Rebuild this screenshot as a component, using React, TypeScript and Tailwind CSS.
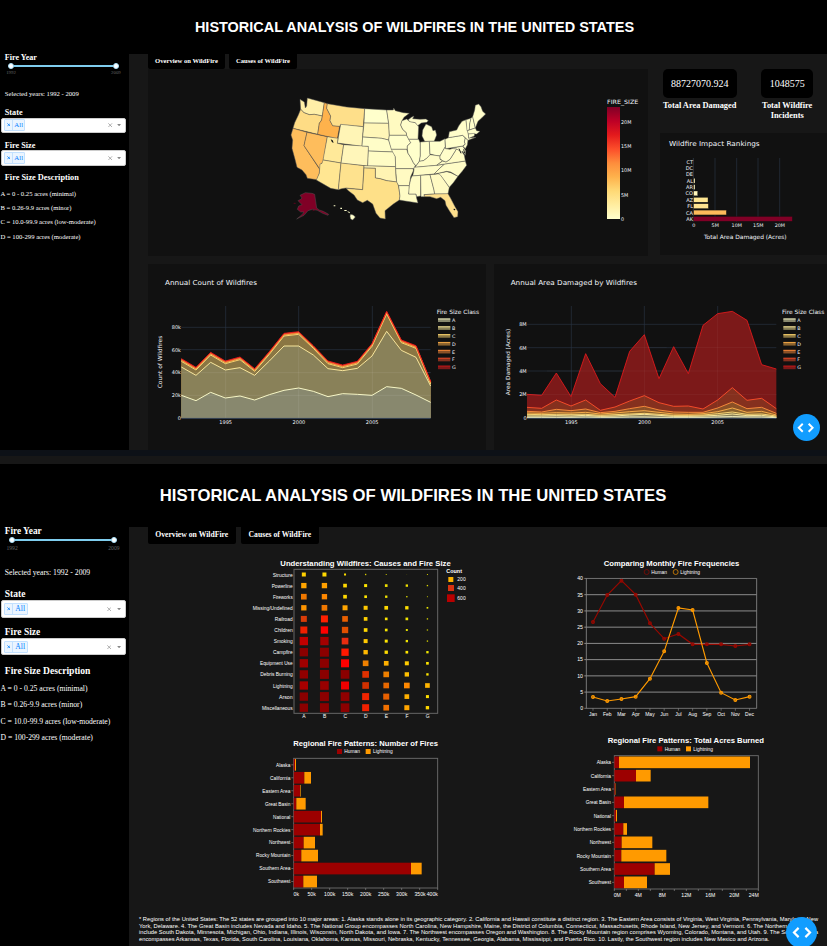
import React from "react";

const SANS = "'DejaVu Sans', Verdana, sans-serif";
const ARIAL = "'Liberation Sans', Arial, sans-serif";

type LabelProps = {
  x: number;
  y: number;
  size: number;
  children: string;
  w?: number;
  anchor?: "start" | "middle" | "end";
  family?: string;
  bold?: boolean;
  fill?: string;
  rotate?: boolean;
};

/** Chart text, centred vertically around y. */
function Label({ x, y, size, children, w, anchor = "start", family = SANS, bold, fill = "#f2f5fa", rotate }: LabelProps) {
  return (
    <text
      x={x}
      y={y + size * 0.36}
      fontSize={size}
      fontFamily={family}
      fontWeight={bold ? 700 : 400}
      fill={fill}
      textAnchor={anchor}
      textLength={w}
      lengthAdjust="spacingAndGlyphs"
      transform={rotate ? `rotate(-90 ${x} ${y})` : undefined}
    >
      {children}
    </text>
  );
}

/* ---------- sidebar ---------- */

function Select({ big }: { big?: boolean }) {
  return (
    <div
      className={
        "ml-px flex w-[125.3px] items-center rounded-[2px] border border-[#ccc] bg-white " +
        (big ? "h-[17.3px]" : "h-[15.5px]")
      }
    >
      <div
        className={
          "ml-[1.6px] flex items-stretch rounded-[1px] border border-[#c2e0ff] bg-[#ebf5ff] text-[#007eff] " +
          (big ? "h-[12.6px] w-[24.6px] text-[7.6px]" : "h-[11.6px] w-[21.6px] text-[6.8px]")
        }
      >
        <span className="flex w-[8.6px] items-center justify-center border-r border-[#c2e0ff]">
          <svg width="3.6" height="3.6" viewBox="0 0 4 4">
            <path d="M.4 .4 3.6 3.6M3.6 .4 .4 3.6" stroke="#007eff" strokeWidth=".85" />
          </svg>
        </span>
        <span className="flex flex-1 items-center justify-center">All</span>
      </div>
      <div className={"ml-auto flex items-center " + (big ? "mr-[4.5px] gap-[5.5px]" : "mr-[4px] gap-[4.5px]")}>
        <svg width="4.4" height="4.4" viewBox="0 0 4 4">
          <path d="M.3 .3 3.7 3.7M3.7 .3 .3 3.7" stroke="#888" strokeWidth=".6" />
        </svg>
        <svg width="4.2" height="2.4" viewBox="0 0 4 2.4">
          <path d="M0 0H4L2 2.3Z" fill="#888" />
        </svg>
      </div>
    </div>
  );
}

function Slider({ big }: { big?: boolean }) {
  return (
    <>
      <div className={"flex items-center " + (big ? "ml-[9px] h-[10px] w-[108px]" : "ml-[8px] h-[7.5px] w-[111px]")}>
        <i className="size-[6.4px] shrink-0 rounded-full border border-[#abe2fb] bg-white" />
        <i className="h-[2px] flex-1 bg-[#7fcdee]" />
        <i className="size-[6.4px] shrink-0 rounded-full border border-[#abe2fb] bg-white" />
      </div>
      <div
        className={
          "flex h-[7px] items-center justify-between leading-none text-[#666] " +
          (big ? "ml-[6.5px] w-[113px] text-[5.6px]" : "ml-[6.2px] w-[114.5px] text-[4.8px]")
        }
      >
        <span>1992</span>
        <span>2009</span>
      </div>
    </>
  );
}

const sizes = [
  "A = 0 - 0.25 acres (minimal)",
  "B = 0.26-9.9 acres (minor)",
  "C = 10.0-99.9 acres (low-moderate)",
  "D = 100-299 acres (moderate)",
];

function Sidebar({ big }: { big?: boolean }) {
  const head = "ml-[4.8px] flex items-center whitespace-nowrap font-bold leading-none ";
  return (
    <aside className="w-[128.6px] shrink-0 bg-black">
      <div className={head + (big ? "h-[8px] pt-[1.4px] text-[9.3px]" : "h-[8px] pt-[0.6px] text-[8.1px]")}>Fire Year</div>
      <Slider big={big} />
      <div
        className={
          "ml-[4.8px] flex h-[10px] items-center whitespace-nowrap " +
          (big ? "mt-[15.5px] text-[7.7px]" : "mt-[12px] text-[6.66px]")
        }
      >
        Selected years: 1992 - 2009
      </div>
      <div className={head + (big ? "mt-[12px] h-[10.8px] text-[9.5px]" : "mt-[9.5px] h-[9.5px] text-[8.2px]")}>State</div>
      <Select big={big} />
      <div className={head + (big ? "mt-[10px] h-[10.6px] text-[9.5px]" : "mt-[8px] h-[9.3px] text-[8.2px]")}>Fire Size</div>
      <Select big={big} />
      <div className={head + (big ? "mt-[9.8px] h-[10px] pt-px text-[9.6px]" : "mt-[7.2px] h-[10px] pt-px text-[8.3px]")}>
        Fire Size Description
      </div>
      <div className={big ? "mt-[4.7px]" : "mt-[3.5px]"}>
        {sizes.map((s) => (
          <div
            key={s}
            className={
              "ml-[0.5px] flex items-center whitespace-nowrap " + (big ? "h-[16.6px] text-[7.67px]" : "h-[14.4px] text-[6.65px]")
            }
          >
            {s}
          </div>
        ))}
      </div>
    </aside>
  );
}

function Fab({ big }: { big?: boolean }) {
  return (
    <button
      className={
        "absolute flex items-center justify-center rounded-full bg-[#119dff] " +
        (big ? "left-[786px] top-[453.3px] size-[31px]" : "left-[792.7px] top-[414.3px] size-[27px]")
      }
    >
      <svg width={big ? 20 : 17.4} height={big ? 11 : 9.6} viewBox="0 0 20 11" fill="none" stroke="#fff" strokeWidth="2.2">
        <path d="M6.6 .9 2 5.5 6.6 10.1M13.4 .9 18 5.5 13.4 10.1" />
      </svg>
    </button>
  );
}

/* ---------- map ---------- */

const states: [string, string][] = [
  ["82,54 133,68 127,108 103,103 88,104 72,98 62,88 61,72 60,58 73,66 76,84 80,78", "#ffefa8"],
  ["62,88 72,98 88,104 103,103 127,108 125,120 118,130 113,163 39,145 44,128 55,105", "#fedc85"],
  ["39,145 81,157 72,197 119,268 118,280 111,299 82,295 78,284 66,270 51,262 45,238 36,205 38,180 33,165", "#febd5c"],
  ["81,157 142,170 129,248 124,250 120,268 72,197", "#febd5c"],
  ["133,68 142,71 140,85 152,108 150,122 158,137 179,139 172,176 113,163 118,130 125,120 127,108", "#feb24c"],
  ["142,71 200,81 254,86 250,140 182,134 179,139 158,137 150,122 152,108 140,85", "#fedf8a"],
  ["182,133 250,140 246,199 172,189", "#fff5b6"],
  ["142,170 174,175 172,190 191,194 183,249 129,240", "#ffe999"],
  ["191,194 266,199 263,258 183,250", "#fff6ba"],
  ["129,240 183,249 175,329 152,325 109,300 118,280 119,266 120,252 126,250", "#ffe692"],
  ["183,249 252,257 248,329 198,324 185,326 175,329", "#fee28e"],
  ["254,86 320,90 326,130 252,129", "#ffffcc"],
  ["252,129 326,130 328,166 326,180 305,175 248,171", "#fff6b8"],
  ["248,171 305,175 326,180 334,205 341,216 265,213 265,199 246,198", "#fffdc8"],
  ["265,213 341,216 346,230 347,260 263,258", "#fffcc5"],
  ["252,257 347,260 348,290 350,306 320,302 300,296 286,294 286,265 252,264", "#fff4b3"],
  ["252,264 286,265 286,294 300,296 320,302 352,306 356,320 360,348 358,360 340,372 315,392 316,417 300,414 288,400 278,372 262,361 248,368 232,360 222,345 205,332 198,325 248,329", "#fee088"],
  ["320,90 340,90 341,84 346,92 370,98 388,100 372,112 366,122 362,135 368,148 379,158 380,166 328,166 326,130", "#fffac1"],
  ["328,166 380,166 388,180 392,188 382,198 382,208 334,208 326,180", "#ffffcc"],
  ["334,208 380,208 384,220 392,232 400,248 406,256 402,266 347,266 346,230 338,216", "#fffcc6"],
  ["347,266 400,266 400,272 392,290 388,317 356,317 350,306", "#fffac2"],
  ["356,317 388,317 388,330 386,342 408,342 410,355 414,369 395,366 375,363 358,360 360,348", "#fffcc5"],
  ["366,122 380,117 388,124 406,128 412,134 416,140 414,178 386,178 380,166 379,158 368,148 362,135", "#fffdca"],
  ["384,120 394,112 402,108 398,116 420,118 438,117 445,122 440,127 424,129 413,137 406,128 390,125", "#fffdca"],
  ["434,184 426,168 428,150 438,132 455,140 459,152 466,150 470,165 464,180 462,184", "#fffdca"],
  ["386,178 416,178 421,190 421,228 418,244 408,258 400,248 392,232 384,220 382,208 382,198 392,188", "#ffffcc"],
  ["421,186 448,184 450,225 440,235 430,242 418,244 421,228", "#ffffcc"],
  ["448,184 464,184 480,184 495,176 496,200 488,214 480,228 465,226 450,222", "#ffffcc"],
  ["418,244 430,242 440,235 450,224 465,226 480,228 480,238 488,242 470,256 404,262 408,258", "#fffcc6"],
  ["402,262 470,256 494,252 480,264 462,282 398,288 402,270", "#fffcc6"],
  ["396,288 422,286 422,348 410,350 408,342 386,342 388,316 392,298", "#fffcc6"],
  ["422,286 450,284 462,330 464,342 432,344 434,350 423,350", "#fffcc6"],
  ["450,284 480,281 508,322 504,342 464,342 462,330", "#fffac2"],
  ["432,344 464,342 504,341 512,355 524,378 534,395 533,410 522,413 508,392 498,376 495,362 482,352 470,356 450,350 434,350", "#fedf8c"],
  ["474,280 500,275 512,278 534,289 520,308 508,322 482,286", "#fffcc6"],
  ["494,252 556,243 560,256 548,272 534,289 512,276 500,274 474,280 462,282 480,264", "#fffcc6"],
  ["470,256 488,243 498,246 510,238 520,222 530,206 545,214 553,226 556,243 494,252", "#fffcc6"],
  ["496,200 497,206 510,208 520,204 530,206 520,222 510,238 498,246 488,242 480,236 480,228 488,214", "#fffdca"],
  ["514,205 548,198 557,212 556,226 548,214 545,216 530,207", "#ffffcc"],
  ["495,178 505,173 548,166 556,174 553,186 556,192 548,198 497,206", "#ffffcc"],
  ["556,174 564,180 562,195 556,206 549,199 556,192 553,186", "#ffffcc"],
  ["505,173 508,155 530,150 536,138 546,124 558,119 562,148 565,160 566,174 588,172 564,181 548,166", "#fffdca"],
  ["558,119 573,115 569,132 568,150 561,152", "#ffffcc"],
  ["573,115 578,110 586,144 568,150 569,132", "#ffffcc"],
  ["578,110 584,90 586,76 596,72 603,80 608,94 617,102 605,114 594,124 586,144", "#fffdca"],
  ["562,152 586,144 590,152 600,154 590,162 565,162", "#ffffcc"],
  ["565,162 584,160 583,168 566,175", "#ffffcc"],
  ["76,338 96,340 104,343 110,384 118,390 130,394 146,403 144,406 128,400 112,391 98,388 84,392 72,406 50,417 66,404 72,396 62,396 52,388 56,378 66,374 54,362 62,358 66,354 60,346", "#800026"],
  ["212,403 220,405 226,411 218,420 212,417 210,408", "#ffffcc"],
];

function MapPanel() {
  return (
    <svg className="h-[187px] w-[500px] bg-[#111111]" viewBox="-396 -33 1500 561">
      <defs>
        <linearGradient id="ylorrd" x1="0" y1="1" x2="0" y2="0">
          {["#ffffcc", "#ffeda0", "#fed976", "#feb24c", "#fd8d3c", "#fc4e2a", "#e31a1c", "#bd0026", "#800026"].map((c, i) => (
            <stop key={c} offset={i / 8} stopColor={c} />
          ))}
        </linearGradient>
      </defs>
      {states.map(([points, color]) => (
        <polygon key={points} points={points} fill={color} stroke="#555" strokeWidth="1.4" strokeLinejoin="round" />
      ))}
      <path d="M152 178l6 3 3 7-5-1zM521 386l5 1-1 4-4-1z" fill="#111" />
      <path d="M161 376h5v3h-5zM181 383h5v4h-5zM193 390h7v3h-7zM202 394l7 2 1 4-6-3z" fill="#ffffcc" />
      <path d="M41 370h6M98 392l8-3" stroke="#800026" strokeWidth="2" />
      <path d="M537 206l6 14M551 208l3 12" stroke="#222" strokeWidth="3" />
      <g transform="translate(930 -90)">
        <Label x={51} y={156} size={17.5} w={94}>FIRE_SIZE</Label>
        <rect x={51} y={171} width={39} height={336} fill="url(#ylorrd)" />
        {["0", "5M", "10M", "15M", "20M"].map((t, i) => (
          <Label key={t} x={93} y={507 - i * 72.8} size={15} w={[9, 22, 31, 31, 31][i]}>{t}</Label>
        ))}
      </g>
    </svg>
  );
}

/* ---------- overview charts ---------- */

const ranks: [string, number, string][] = [
  ["CT", 0, "#ffffcc"], ["DC", 0, "#ffffcc"], ["DE", 0, "#ffffcc"], ["AL", 4, "#fff7bc"], ["AR", 4, "#fff7bc"],
  ["CO", 12, "#fff6ba"], ["AZ", 43, "#fee692"], ["FL", 44, "#fee391"], ["CA", 98, "#febb5a"], ["AK", 296, "#800026"],
];

function Rankings() {
  return (
    <svg className="h-[122px] w-[167px] bg-[#111111]" viewBox="210 249 501 366">
      <Label x={237} y={281} size={20.5} w={272}>Wildfire Impact Rankings</Label>
      {[375, 440, 504, 569].map((x) => (
        <path key={x} d={`M${x} 324V516`} stroke="#283442" strokeWidth="2" />
      ))}
      <path d="M310 324V516" stroke="#506784" strokeOpacity=".6" strokeWidth="2" />
      {ranks.map(([s, v, c], i) => (
        <g key={s}>
          {v > 0 && <rect x={311} y={327.5 + i * 19.1} width={v} height={14.5} fill={c} stroke="#111" strokeWidth="1" />}
          <Label x={309} y={335.5 + i * 19.1} size={15} anchor="end">{s}</Label>
        </g>
      ))}
      {["0", "5M", "10M", "15M", "20M"].map((t, i) => (
        <Label key={t} x={311 + i * 64.6} y={527} size={14.5} anchor="middle">{t}</Label>
      ))}
      <Label x={342} y={560} size={17.5} w={248}>Total Area Damaged (Acres)</Label>
    </svg>
  );
}

const lineColors = ["#ffffcc", "#ffeda0", "#fed976", "#feb24c", "#fd8d3c", "#fc4e2a", "#e31a1c"];
const fillColors = ["#88886e", "#898159", "#8a7643", "#8a622e", "#8a5026", "#85301e", "#7c1919"];
const legendLines = ["#e6e6b8", "#ead98f", "#f0cb68", "#e8a043", "#e87f35", "#dc4526", "#bf1718"];

function StackedArea({ series, x0 }: { series: number[][]; x0: number }) {
  const xs = series[0].map((_, i) => x0 + i * 44);
  const pts = (s: number[]) => s.map((y, i) => `${xs[i]},${y}`).join(" ");
  const right = xs[xs.length - 1];
  return (
    <>
      {[...series].reverse().map((s, k) => {
        const i = 6 - k;
        return <polygon key={i} points={`${pts(s)} ${right},474 ${x0},474`} fill={fillColors[i]} />;
      })}
      {series.map((s, i) => (
        <polyline key={i} points={pts(s)} fill="none" stroke={lineColors[i]} strokeWidth={i === 6 ? 2.6 : 2.8} />
      ))}
    </>
  );
}

function AreaLegend({ x }: { x: number }) {
  return (
    <>
      <Label x={x} y={155} size={17.5} w={127}>Fire Size Class</Label>
      {["A", "B", "C", "D", "E", "F", "G"].map((t, i) => (
        <g key={t}>
          <rect x={x + 4} y={177 + i * 23.6} width={37} height={9} fill={fillColors[i]} />
          <rect x={x + 4} y={175 + i * 23.6} width={37} height={3.5} fill={legendLines[i]} />
          <Label x={x + 46} y={181 + i * 23.6} size={14.5}>{t}</Label>
        </g>
      ))}
    </>
  );
}

const countTop = [296, 322, 277, 303, 291, 326, 275, 220, 215, 257, 303, 315, 304, 251, 154, 240, 257, 364];
const countSeries = [
  [406, 422, 397, 414, 408, 420, 404, 391, 384, 394, 410, 401, 403, 406, 380, 385, 405, 427],
  [321, 346, 307, 330, 323, 346, 303, 258, 258, 285, 326, 332, 325, 288, 214, 271, 292, 378],
  countTop.map((y) => y + 8),
  countTop.map((y) => y + 5),
  countTop.map((y) => y + 3),
  countTop.map((y) => y + 1.5),
  countTop,
];

function AnnualCount() {
  return (
    <svg className="h-[186px] w-[338px] bg-[#111111]" viewBox="24 12 1014 558">
      <Label x={75} y={68} size={20.5} w={276}>Annual Count of Wildfires</Label>
      <path d="M257 138V474M476 138V474M697 138V474M124 202H872M124 269H872M124 338H872M124 406H872" stroke="#283442" strokeWidth="2" />
      <StackedArea series={countSeries} x0={124} />
      <path d="M257 300V474M476 215V474M697 250V474M124 338H872M124 406H872" stroke="#fff" strokeOpacity=".12" strokeWidth="2" />
      <path d="M124 475H872" stroke="#506784" strokeWidth="2" />
      {["0", "20k", "40k", "60k", "80k"].map((t, i) => (
        <Label key={t} x={123} y={474 - i * 68.2} size={15} anchor="end">{t}</Label>
      ))}
      {["1995", "2000", "2005"].map((t, i) => (
        <Label key={t} x={257 + i * 219.7} y={486} size={15} anchor="middle">{t}</Label>
      ))}
      <Label x={60} y={306} size={17} w={158} anchor="middle" rotate>Count of Wildfires</Label>
      <AreaLegend x={890} />
    </svg>
  );
}

const areaSeries = [
  [472, 472, 472, 472, 471, 472, 472, 471, 471, 472, 472, 472, 472, 471, 470, 471, 471, 473],
  [468, 468, 467, 468, 466, 469, 468, 465, 463, 466, 469, 469, 468, 466, 462, 467, 466, 471],
  [463, 464, 463, 463, 463, 466, 464, 462, 460, 463, 466, 466, 465, 461, 456, 463, 462, 468],
  [459, 460, 458, 459, 457, 462, 459, 455, 452, 457, 462, 463, 461, 455, 444, 457, 454, 465],
  [454, 456, 448, 452, 447, 458, 454, 446, 439, 450, 456, 457, 457, 444, 426, 446, 442, 460],
  [442, 445, 420, 438, 420, 451, 441, 423, 407, 428, 439, 438, 447, 420, 383, 421, 415, 446],
  [403, 406, 339, 410, 281, 371, 412, 274, 224, 356, 260, 341, 196, 161, 154, 181, 314, 327],
];

function AnnualArea() {
  return (
    <svg className="h-[186px] w-[333px] bg-[#111111]" viewBox="42 12 999 558">
      <Label x={92} y={68} size={20.5} w={379}>Annual Area Damaged by Wildfires</Label>
      <path d="M274 138V474M493 138V474M713 138V474M141 193H889M141 263H889M141 333H889M141 404H889" stroke="#283442" strokeWidth="2" />
      <StackedArea series={areaSeries} x0={141} />
      <path d="M274 410V474M493 224V474M713 161V474M460 263H560M650 263H830M200 333H889M141 404H889" stroke="#fff" strokeOpacity=".07" strokeWidth="2" />
      <path d="M141 475H889" stroke="#506784" strokeWidth="2" />
      {["0", "2M", "4M", "6M", "8M"].map((t, i) => (
        <Label key={t} x={140} y={474 - i * 70.2} size={15} anchor="end">{t}</Label>
      ))}
      {["1995", "2000", "2005"].map((t, i) => (
        <Label key={t} x={274 + i * 219.5} y={486} size={15} anchor="middle">{t}</Label>
      ))}
      <Label x={84} y={306} size={17} w={200} anchor="middle" rotate>Area Damaged (Acres)</Label>
      <AreaLegend x={906} />
    </svg>
  );
}

/* ---------- causes charts ---------- */

const causes: [string, number, number[], string[]][] = [
  ["Structure", 60, [12, 12, 6, 4, 3, 1.5, 3], ["#ffd000", "#ffd800", "#ffe000", "#d8cc00", "#c8c400", "#777700", "#d0cc00"]],
  ["Powerline", 63, [16, 16, 11, 9, 8, 7, 4], ["#ffa500", "#ffa000", "#ffd800", "#ffe600", "#f0e000", "#f0e000", "#d8d400"]],
  ["Fireworks", 59, [17, 16, 11, 8, 7, 4, 3], ["#f07800", "#ff8800", "#ffd800", "#ffe600", "#f0e400", "#e0dc00", "#b0b000"]],
  ["Missing/Undefined", 120, [16, 17, 15, 12, 11, 10, 5], ["#ff9500", "#f07800", "#ffa500", "#ffc800", "#ffd800", "#ffe000", "#e8e400"]],
  ["Railroad", 54, [18, 21, 17, 11, 8, 8, 4], ["#d83c08", "#ff2000", "#e86000", "#ffd000", "#ffe600", "#f0e400", "#d8d400"]],
  ["Children", 55, [21, 22, 19, 11, 8, 6, 4], ["#f02000", "#ff0000", "#e05000", "#ffd800", "#f8e800", "#e0dc00", "#b8b800"]],
  ["Smoking", 57, [25, 25, 20, 12, 9, 7, 4], ["#c00000", "#a40000", "#e82c10", "#ffc800", "#ffe600", "#f0e400", "#d8d400"]],
  ["Campfire", 59, [25, 27, 22, 13, 10, 8, 7], ["#8b0000", "#8b0000", "#ff1800", "#ffb800", "#ffdc00", "#ffe600", "#f0e800"]],
  ["Equipment Use", 98, [25, 27, 24, 17, 14, 12, 8], ["#a00000", "#8b0000", "#ff0000", "#f08000", "#ffb000", "#ffcc00", "#ffe600"]],
  ["Debris Burning", 97, [25, 27, 26, 20, 17, 13, 7], ["#900000", "#8b0000", "#8b0000", "#e03000", "#f08000", "#ffc000", "#ffe600"]],
  ["Lightning", 59, [25, 26, 24, 20, 17, 17, 14], ["#a80000", "#980000", "#f00000", "#d03000", "#e86800", "#ff8800", "#ffb400"]],
  ["Arson", 41, [25, 27, 26, 21, 18, 14, 9], ["#8b0000", "#8b0000", "#900000", "#f02400", "#e86000", "#ffb000", "#ffe000"]],
  ["Miscellaneous", 92, [25, 27, 26, 21, 17, 15, 10], ["#8b0000", "#8b0000", "#8b0000", "#f02000", "#f07000", "#ffa500", "#ffd800"]],
];

function CauseMatrix() {
  return (
    <svg className="h-[180px] w-[240px]" viewBox="0 0 720 540">
      <Label x={121} y={38} size={24} w={511} family={ARIAL} bold fill="#fff">Understanding Wildfires: Causes and Fire Size</Label>
      <rect x={162} y={58} width={431} height={432} fill="none" stroke="#666" strokeWidth="3" />
      {causes.map(([name, w, s, colors], r) => (
        <g key={name}>
          <Label x={158} y={74 + r * 33.3} size={15.5} w={w} anchor="end" family={ARIAL} fill="#fff">{name}</Label>
          {s.map((d, c) => (
            <rect key={c} x={191.5 + c * 61.8 - d / 2} y={73.5 + r * 33.3 - d / 2} width={d} height={d} fill={colors[c]} />
          ))}
        </g>
      ))}
      {["A", "B", "C", "D", "E", "F", "G"].map((t, i) => (
        <Label key={t} x={192 + i * 61.8} y={500} size={15} anchor="middle" family={ARIAL} fill="#fff">{t}</Label>
      ))}
      <Label x={619} y={64} size={16.5} w={47} family={ARIAL} bold fill="#fff">Count</Label>
      <rect x={625} y={81} width={15} height={15} fill="#ffb400" />
      <rect x={624} y={105} width={18} height={18} fill="#d83210" />
      <rect x={621} y={133} width={23} height={23} fill="#b80000" />
      {["200", "400", "600"].map((t, i) => (
        <Label key={t} x={652} y={[88, 115, 146][i]} size={15} w={25} family={ARIAL} fill="#fff">{t}</Label>
      ))}
    </svg>
  );
}

const human = [216, 135, 92, 134, 220, 266, 252, 283, 283, 283, 288, 283];
const lightning = [441, 453, 447, 440, 386, 304, 174, 180, 339, 428, 450, 440];

function Monthly() {
  const at = (i: number) => 99 + i * 42.7;
  return (
    <svg className="h-[180px] w-[240px]" viewBox="0 0 720 540">
      <Label x={131} y={38} size={24} w={407} family={ARIAL} bold fill="#fff">Comparing Monthly Fire Frequencies</Label>
      <circle cx={260} cy={66} r={7.5} fill="none" stroke="#960800" strokeWidth="2" />
      <Label x={274} y={66} size={15.5} w={47} family={ARIAL} fill="#fff">Human</Label>
      <circle cx={347} cy={66} r={7.5} fill="none" stroke="#ff9a00" strokeWidth="2" />
      <Label x={361} y={66} size={15.5} w={59} family={ARIAL} fill="#fff">Lightning</Label>
      {[0, 5, 10, 15, 20, 25, 30, 35, 40].map((v) => {
        const y = 475 - v * 9.74;
        return (
          <g key={v}>
            <path d={`M73 ${y}H590`} stroke={v === 0 || v === 40 ? "#888" : "#aaa"} strokeWidth="2.4" />
            <Label x={69} y={y} size={15.5} anchor="end" family={ARIAL} fill="#fff">{String(v)}</Label>
          </g>
        );
      })}
      <path d="M79 85V475M590 85V475" stroke="#888" strokeWidth="2.6" />
      {[human, lightning].map((s, k) => (
        <g key={k} fill="none" stroke={k ? "#ff9a00" : "#980800"} strokeWidth="3.4">
          <polyline points={s.map((y, i) => `${at(i)},${y}`).join(" ")} />
          {s.map((y, i) => (
            <circle key={i} cx={at(i)} cy={y} r={4.2} fillOpacity=".45" fill={k ? "#ff9a00" : "#980800"} />
          ))}
        </g>
      ))}
      {["Jan", "Feb", "Mar", "Apr", "May", "Jun", "Jul", "Aug", "Sep", "Oct", "Nov", "Dec"].map((t, i) => (
        <g key={t}>
          <path d={`M${at(i)} 475V482`} stroke="#888" strokeWidth="2" />
          <Label x={at(i)} y={493} size={15} anchor="middle" family={ARIAL} fill="#fff">{t}</Label>
        </g>
      ))}
    </svg>
  );
}

type Region = [string, number, number, number];

function RegionBars({ title, titleX, titleW, titleY, legendX, top, bottom, x0, right, rows, ticks, marks }: {
  title: string; titleX: number; titleW: number; titleY: number; legendX: number; top: number; bottom: number;
  x0: number; right: number; rows: Region[]; ticks: [string, number][]; marks: number;
}) {
  const step = (bottom - top) / 10;
  return (
    <svg className="h-[180px] w-[240px]" viewBox="0 0 720 540">
      <Label x={titleX} y={titleY} size={24} w={titleW} family={ARIAL} bold fill="#fff">{title}</Label>
      <rect x={legendX} y={titleY + 19} width={15} height={15} fill="#9c0000" />
      <Label x={legendX + 22} y={titleY + 26.5} size={15.5} w={47} family={ARIAL} fill="#fff">Human</Label>
      <rect x={legendX + 86} y={titleY + 19} width={15} height={15} fill="#ff9a00" />
      <Label x={legendX + 108} y={titleY + 26.5} size={15.5} w={59} family={ARIAL} fill="#fff">Lightning</Label>
      <rect x={x0} y={top} width={right - x0} height={bottom - top} fill="none" stroke="#6c6c6c" strokeWidth="2.8" />
      {rows.map(([name, w, a, b], i) => {
        const y = top + step * (i + 0.5);
        return (
          <g key={name}>
            <path d={`M${x0 - 7} ${y}H${x0}`} stroke="#888" strokeWidth="2" />
            <rect x={x0} y={y - 17.5} width={a - x0} height={35} fill="#9c0000" />
            <rect x={a} y={y - 17.5} width={b - a} height={35} fill="#ff9a00" />
            <Label x={x0 - 10} y={y} size={15.5} w={w} anchor="end" family={ARIAL} fill="#fff">{name}</Label>
          </g>
        );
      })}
      {ticks.map(([t, x]) => (
        <Label key={t} x={x} y={bottom + 17.5} size={15.5} anchor="middle" family={ARIAL} fill="#fff">{t}</Label>
      ))}
      {Array.from({ length: marks + 1 }, (_, i) => x0 + ((right - x0) * i) / marks).map((x) => (
        <path key={x} d={`M${x} ${bottom}v6`} stroke="#888" strokeWidth="2" />
      ))}
    </svg>
  );
}

const fireCounts: Region[] = [
  ["Alaska", 43, 165, 168], ["California", 61, 193, 213], ["Eastern Area", 84, 180, 182], ["Great Basin", 76, 169, 197],
  ["National", 52, 243, 246], ["Northern Rockies", 112, 240, 248], ["Northwest", 64, 191, 225],
  ["Rocky Mountain", 103, 184, 234], ["Southern Area", 93, 513, 545], ["Southwest", 67, 190, 231],
];
const acres: Region[] = [
  ["Alaska", 43, 177, 570], ["California", 61, 228, 272], ["Eastern Area", 84, 166, 167], ["Great Basin", 76, 192, 445],
  ["National", 52, 168, 171], ["Northern Rockies", 112, 190, 201], ["Northwest", 64, 185, 277],
  ["Rocky Mountain", 103, 184, 319], ["Southern Area", 93, 284, 330], ["Southwest", 67, 192, 261],
];

/* ---------- page ---------- */

function Tabs({ big }: { big?: boolean }) {
  const tab = "flex items-center justify-center whitespace-nowrap rounded-b-[2px] bg-black font-bold leading-none ";
  return (
    <nav className={"flex " + (big ? "h-[16.5px] gap-[5px] text-[7.7px]" : "h-[15px] gap-[4px] text-[6.62px]")}>
      <div className={tab + (big ? "w-[88.3px]" : "w-[77px]")}>Overview on WildFire</div>
      <div className={tab + (big ? "w-[78px]" : "w-[68px]")}>Causes of WildFire</div>
    </nav>
  );
}

const notes = [
  "* Regions of the United States: The 52 states are grouped into 10 major areas: 1. Alaska stands alone in its geographic category. 2. California and Hawaii constitute a distinct region. 3. The Eastern Area consists of Virginia, West Virginia, Pennsylvania, Maryland, New",
  "York, Delaware. 4. The Great Basin includes Nevada and Idaho. 5. The National Group encompasses North Carolina, New Hampshire, Maine, the District of Columbia, Connecticut, Massachusetts, Rhode Island, New Jersey, and Vermont. 6. The Northern Rockies",
  "include South Dakota, Minnesota, Michigan, Ohio, Indiana, Illinois, Wisconsin, North Dakota, and Iowa. 7. The Northwest encompasses Oregon and Washington. 8. The Rocky Mountain region comprises Wyoming, Colorado, Montana, and Utah. 9. The Southern Area",
  "encompasses Arkansas, Texas, Florida, South Carolina, Louisiana, Oklahoma, Kansas, Missouri, Nebraska, Kentucky, Tennessee, Georgia, Alabama, Mississippi, and Puerto Rico. 10. Lastly, the Southwest region includes New Mexico and Arizona.",
];

export default function App() {
  return (
    <div className="h-[946px] w-[827px] overflow-hidden bg-[#171717] font-['Liberation_Serif',serif] text-white">
      <section className="relative h-[450px]">
        <header className="flex h-[54px] items-center justify-center bg-black pl-[2px]">
          <h1 className="whitespace-nowrap font-['Liberation_Sans',Arial,sans-serif] text-[14.47px] font-bold leading-none">
            HISTORICAL ANALYSIS OF WILDFIRES IN THE UNITED STATES
          </h1>
        </header>
        <div className="flex h-[396px]">
          <Sidebar />
          <main className="flex flex-1 flex-col pl-[19.4px]">
            <Tabs />
            <div className="flex h-[187px]">
              <MapPanel />
              <div className="ml-[12px] flex w-[167px] flex-col justify-between pb-px">
                <div className="flex h-[56px] pl-[2.7px]">
                  <div className="flex w-[74px] flex-col items-center">
                    <div className="flex h-[28.7px] w-full items-center justify-center rounded-[5px] bg-black text-[10px]">88727070.924</div>
                    <div className="mt-[3.6px] whitespace-nowrap text-[8.38px] font-bold leading-[9.6px]">Total Area Damaged</div>
                  </div>
                  <div className="ml-[24.5px] flex w-[52px] flex-col items-center">
                    <div className="flex h-[28.7px] w-full items-center justify-center rounded-[5px] bg-black text-[10px]">1048575</div>
                    <div className="mt-[3.6px] whitespace-nowrap text-center text-[8.38px] font-bold leading-[9.6px]">
                      Total Wildfire
                      <br />
                      Incidents
                    </div>
                  </div>
                </div>
                <Rankings />
              </div>
            </div>
            <div className="mt-[8px] flex gap-[8px]">
              <AnnualCount />
              <AnnualArea />
            </div>
          </main>
        </div>
        <Fab />
      </section>
      <div className="h-[6px] bg-[#0d1117]" />
      <div className="h-[8px] bg-[#171717]" />
      <section className="relative h-[482px] overflow-hidden">
        <header className="flex h-[63px] items-center justify-center bg-black pr-px pt-[1.5px]">
          <h1 className="whitespace-nowrap font-['Liberation_Sans',Arial,sans-serif] text-[16.69px] font-bold leading-none">
            HISTORICAL ANALYSIS OF WILDFIRES IN THE UNITED STATES
          </h1>
        </header>
        <div className="flex h-[419px]">
          <Sidebar big />
          <main className="flex flex-1 flex-col pl-[19px]">
            <Tabs big />
            <div className="ml-[92.4px] mt-[6.5px] grid w-[560px] grid-cols-[240px_240px] justify-between">
              <CauseMatrix />
              <Monthly />
              <RegionBars
                title="Regional Fire Patterns: Number of Fires" titleX={160} titleW={434} titleY={38} legendX={291}
                top={85} bottom={474} x0={161} right={593} rows={fireCounts} marks={8}
                ticks={[["0k", 169], ["50k", 215], ["100k", 269], ["150k", 323], ["200k", 377], ["250k", 431], ["300k", 485], ["350k", 540], ["400k", 577]]}
              />
              <RegionBars
                title="Regional Fire Patterns: Total Acres Burned" titleX={143} titleW={469} titleY={30} legendX={292}
                top={77} bottom={477} x0={163} right={595} rows={acres} marks={12}
                ticks={[["0M", 172], ["4M", 235], ["8M", 307], ["12M", 379], ["16M", 451], ["20M", 523], ["24M", 581]]}
              />
            </div>
            <div className="-ml-[8.6px] mt-[6.3px] font-['Liberation_Sans',Arial,sans-serif] text-[5.785px] leading-[6.5px]">
              {notes.map((n) => (
                <div key={n} className="whitespace-nowrap">{n}</div>
              ))}
            </div>
          </main>
        </div>
        <Fab big />
      </section>
    </div>
  );
}
